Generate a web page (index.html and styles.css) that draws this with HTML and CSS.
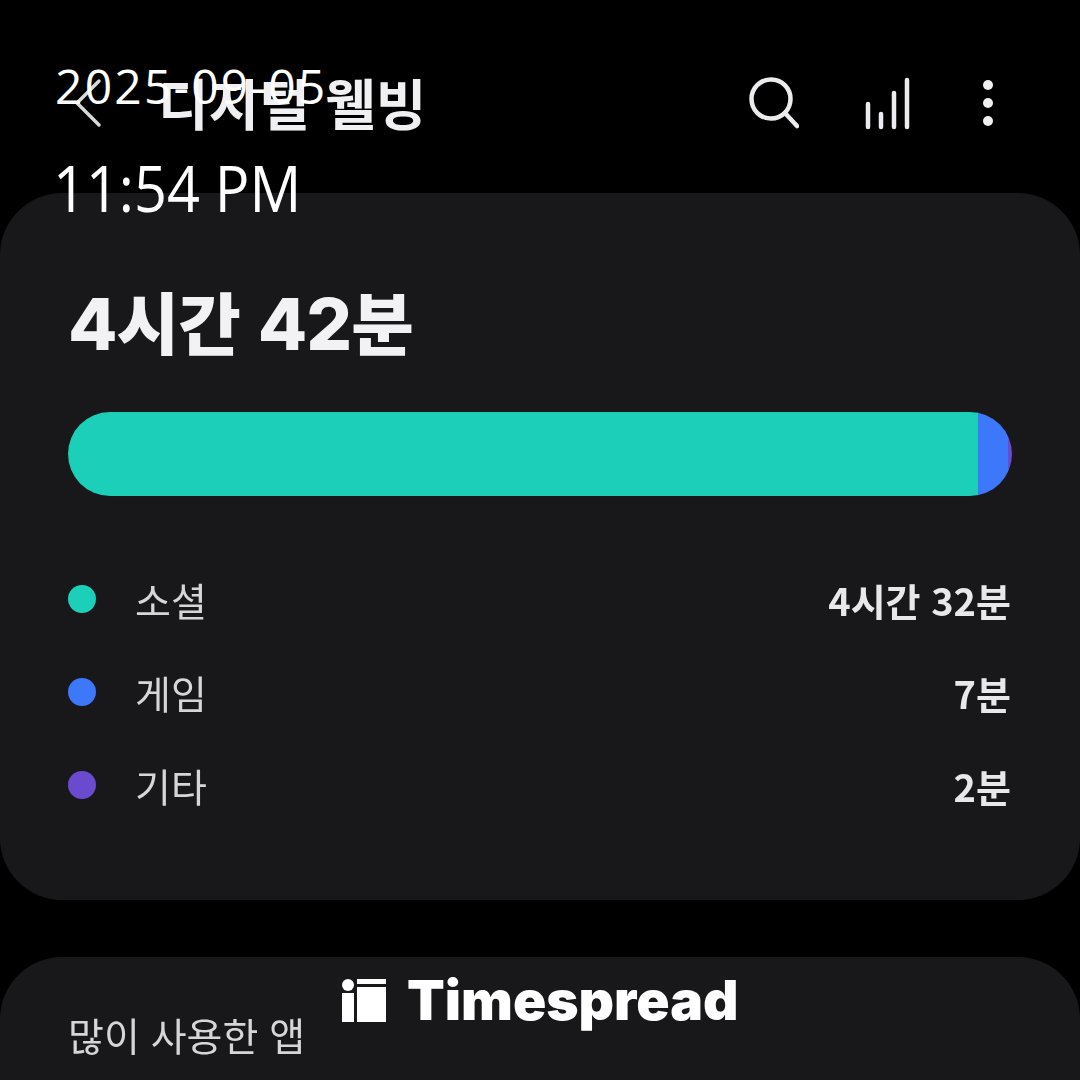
FILE: index.html
```html
<!DOCTYPE html>
<html lang="ko">
  <head>
    <meta charset="UTF-8" />
    <meta name="viewport" content="width=device-width, initial-scale=1.0" />
    <title>디지털 웰빙</title>
    <link rel="stylesheet" href="styles.css">
  </head>
  <body>
    <header class="topbar">
      <div class="topbar-left">
        <svg class="back-icon" width="34" height="54" viewBox="0 0 34 54">
          <path d="M29 5 L7 27 L29 49" />
        </svg>
        <h1>디지털 웰빙</h1>
      </div>
      <div class="topbar-icons">
        <svg class="search-icon" width="50" height="54" viewBox="0 0 50 54">
          <circle cx="22" cy="23" r="19.5" />
          <path d="M36 37 L48 50" />
        </svg>
        <svg class="bars-icon" width="48" height="54" viewBox="0 0 48 54">
          <path d="M4 28 V51 M17 38 V51 M30 17 V51 M43 4 V51" />
        </svg>
        <div class="dots">
          <span></span>
          <span></span>
          <span></span>
        </div>
      </div>
    </header>

    <section class="card summary">
      <div class="total"><b>4</b>시간 <b>42</b>분</div>
      <div class="stack">
        <div class="seg seg-social"></div>
        <div class="seg seg-game"></div>
        <div class="seg seg-other"></div>
      </div>
      <ul class="legend">
        <li>
          <span class="dot dot-social"></span>
          <span class="legend-name">소셜</span>
          <span class="legend-time">4시간 32분</span>
        </li>
        <li>
          <span class="dot dot-game"></span>
          <span class="legend-name">게임</span>
          <span class="legend-time">7분</span>
        </li>
        <li>
          <span class="dot dot-other"></span>
          <span class="legend-name">기타</span>
          <span class="legend-time">2분</span>
        </li>
      </ul>
    </section>

    <section class="card apps">
      <h2>많이 사용한 앱</h2>
    </section>

    <div class="stamp">
      <div class="stamp-date">2025-09-05</div>
      <div class="stamp-time">11:54 PM</div>
    </div>

    <div class="brand">
      <svg width="46" height="44" viewBox="0 0 46 44">
        <circle cx="7" cy="6" r="6" />
        <rect x="1" y="14" width="12" height="29" />
        <rect x="16" y="0" width="29" height="5" />
        <rect x="16" y="8" width="29" height="35" />
      </svg>
      <span>Timespread</span>
    </div>
  </body>
</html>
```

FILE: styles.css
```css
* {
  box-sizing: border-box;
}
html,
body {
  height: 1080px;
  overflow: hidden;
}
body {
  margin: 0;
  background-color: #000000;
  color: #ffffff;
  font-family: "Noto Sans CJK KR", "Noto Sans", sans-serif;
}

.topbar {
  height: 193px;
  padding: 76px 81px 0 70px;
  display: flex;
  justify-content: space-between;
  align-items: flex-start;
}
.topbar-left {
  display: flex;
  align-items: center;
  gap: 54px;
  filter: blur(0.7px);
}
.topbar-left h1 {
  margin: -4px 0 0;
  font-size: 55px;
  line-height: 54px;
  font-weight: 700;
  color: #f0f0f2;
  white-space: nowrap;
}
.back-icon path {
  fill: none;
  stroke: #d8d8da;
  stroke-width: 3.5;
  stroke-linecap: round;
}
.topbar-icons {
  display: flex;
  align-items: center;
  filter: blur(0.5px);
}
.search-icon circle,
.search-icon path,
.bars-icon path {
  fill: none;
  stroke: #ececee;
  stroke-width: 4.5;
  stroke-linecap: round;
}
.search-icon {
  margin-right: 65px;
}
.bars-icon {
  margin-right: 53px;
}
.dots {
  width: 34px;
  display: flex;
  flex-direction: column;
  align-items: flex-end;
  gap: 8px;
}
.dots span {
  width: 10px;
  height: 10px;
  margin-right: 6px;
  border-radius: 50%;
  background-color: #f0f0f2;
}

.card {
  background-color: #18181b;
  border-radius: 62px;
}
.summary {
  height: 707px;
  padding: 90px 68px 0;
}
.total {
  font-size: 68px;
  line-height: 76px;
  font-weight: 900;
  color: #f2f2f4;
  letter-spacing: -1px;
  white-space: nowrap;
  filter: blur(0.6px);
}
.total b {
  font-family: Inter, "Noto Sans", sans-serif;
  font-size: 72px;
  font-weight: 800;
}
.stack {
  margin-top: 50px;
  height: 84px;
  width: 944px;
  border-radius: 42px;
  overflow: hidden;
  display: flex;
}
.seg-social {
  width: 910px;
  background-color: #1ccfb8;
}
.seg-game {
  width: 30px;
  background-color: #3d78fb;
}
.seg-other {
  width: 4px;
  background-color: #6a4bd0;
}
.legend {
  list-style: none;
  margin: 76px 0 0;
  padding: 0;
  width: 943px;
  display: flex;
  flex-direction: column;
  gap: 39px;
}
.legend li {
  height: 54px;
  display: flex;
  align-items: center;
}
.dot {
  width: 28px;
  height: 28px;
  border-radius: 50%;
  margin-right: 39px;
}
.dot-social {
  background-color: #1ccfb8;
}
.dot-game {
  background-color: #3d78fb;
}
.dot-other {
  background-color: #6a4bd0;
}
.legend-name {
  font-size: 39px;
  color: #d6d6d8;
  filter: blur(0.5px);
}
.legend-time {
  margin-left: auto;
  font-size: 38px;
  font-weight: 700;
  color: #e8e8ea;
  filter: blur(0.5px);
}

.apps {
  margin-top: 57px;
  height: 123px;
  padding: 50px 68px 0;
  border-radius: 62px 62px 0 0;
}
.apps h2 {
  margin: 0;
  font-size: 39px;
  line-height: 54px;
  font-weight: 400;
  color: #d6d6d8;
  filter: blur(0.5px);
}

.stamp {
  position: absolute;
  left: 55px;
  top: 55px;
  font-family: "Open Sans", "Noto Sans", sans-serif;
  color: #ffffff;
}
.stamp-date {
  font-size: 48px;
  line-height: 62px;
  letter-spacing: 2.2px;
}
.stamp-time {
  margin-top: 28px;
  margin-left: -2px;
  font-size: 64px;
  line-height: 86px;
  transform: scaleX(0.9);
  transform-origin: left;
}

.brand {
  position: absolute;
  left: 341px;
  top: 970px;
  display: flex;
  align-items: flex-start;
  gap: 20px;
}
.brand svg {
  fill: #ffffff;
  margin-top: 9px;
}
.brand span {
  font-family: Inter, "Liberation Sans", sans-serif;
  font-size: 55px;
  line-height: 60px;
  font-weight: 900;
}
```
